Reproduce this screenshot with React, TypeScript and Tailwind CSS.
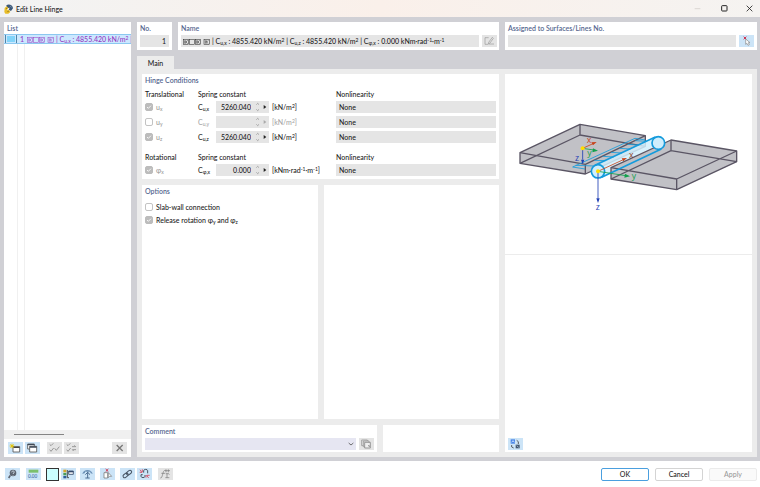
import { useState } from "react"
import type { ReactNode } from "react"
import clsx from "clsx"

const springRows = [
  { id: "ux", symbol: "u", axis: "x", sub: "u,x", value: "5260.040", checked: true, dim: false },
  { id: "uy", symbol: "u", axis: "y", sub: "u,y", value: "", checked: false, dim: true },
  { id: "uz", symbol: "u", axis: "z", sub: "u,z", value: "5260.040", checked: true, dim: false },
]

const rotationRows = [
  { id: "phix", symbol: "φ", axis: "x", sub: "φ,x", value: "0.000", checked: true, dim: false },
]

type Row = (typeof springRows)[number]

function Sub({ children }: { children: ReactNode }) {
  return <sub className="text-[5px] leading-none">{children}</sub>
}

function Sup({ children }: { children: ReactNode }) {
  return <sup className="text-[5px] leading-none">{children}</sup>
}

// Small boxed glyphs that stand for fixed / free directions
function HingeGlyphs() {
  return (
    <svg className="mr-[2px] inline-block h-[6px] w-[27px] align-[-1px]" viewBox="0 0 81 18" fill="none" stroke="currentColor" strokeWidth="1.5">
      {[1, 37, 63].map((x) => (
        <g key={x}>
          <rect x={x} y="1" width="16" height="16" />
          <path d={`M${x + 4} 4v10M${x + 7} 4v10M${x + 13} 4l-5 5 5 5`} />
        </g>
      ))}
      <rect x="19" y="1" width="16" height="16" />
    </svg>
  )
}

function HingeName({ short }: { short?: boolean }) {
  return (
    <>
      <HingeGlyphs />| C<Sub>u,x</Sub> : 4855.420 kN/m<Sup>2</Sup> | C
      {!short && (
        <>
          <Sub>u,z</Sub> : 4855.420 kN/m<Sup>2</Sup> | C<Sub>φ,x</Sub> : 0.000 kNm·rad<Sup>-1</Sup>·m<Sup>-1</Sup>
        </>
      )}
    </>
  )
}

function Title({ children }: { children: ReactNode }) {
  return <h2 className="h-[13px] font-semibold leading-[12px] text-[#56678f]">{children}</h2>
}

function Checkbox({ id, checked, disabled, label }: { id: string; checked: boolean; disabled?: boolean; label: ReactNode }) {
  const [on, setOn] = useState(checked)
  return (
    <div className="flex h-3 items-center gap-[3px]">
      <span className="grid size-2 shrink-0">
        <input
          id={id}
          type="checkbox"
          checked={on}
          disabled={disabled}
          onChange={() => setOn(!on)}
          className="size-2 appearance-none rounded-[2px] border border-[#c3c3c3] bg-white [grid-area:1/1] checked:border-[#bcbcbc] checked:bg-[#bcbcbc]"
        />
        {on && (
          <svg className="pointer-events-none size-2 [grid-area:1/1]" viewBox="0 0 24 24" fill="none" stroke="white" strokeWidth="2.5">
            <path d="M6 12l4 4 8-8" />
          </svg>
        )}
      </span>
      <label htmlFor={id}>{label}</label>
    </div>
  )
}

function ConditionRow({ row, unit }: { row: Row; unit: ReactNode }) {
  return (
    <div className="grid h-3 grid-cols-[53px_18px_53px_67px_minmax(0,1fr)] items-center">
      <div className="text-[#9a9a9a]">
        <Checkbox id={row.id} checked={row.checked} disabled label={<>{row.symbol}<Sub>{row.axis}</Sub></>} />
      </div>
      <label htmlFor={`${row.id}-c`} className={clsx(row.dim && "text-[#a5a5a5]")}>
        C<Sub>{row.sub}</Sub>
      </label>
      <div className="flex h-3 items-center bg-[#e5e5e5]">
        <input id={`${row.id}-c`} defaultValue={row.value} readOnly className="h-3 w-[35px] bg-transparent text-right outline-none" />
        <svg className="ml-[4px] h-[10px] w-[5px]" viewBox="0 0 15 30" fill="none" stroke="#888" strokeWidth="2">
          <path d="M4 8l4-4 4 4M4 22l4 4 4-4" />
        </svg>
        <button aria-label="More" className="ml-[3px] flex h-3 w-[5px] items-center">
          <svg className="h-[6px] w-[4px]" viewBox="0 0 12 18" fill={row.dim ? "#aaa" : "#222"}>
            <path d="M2 3v12l8-6z" />
          </svg>
        </button>
      </div>
      <div className={clsx("pl-[3px]", row.dim && "text-[#a5a5a5]")}>{unit}</div>
      <select aria-label="Nonlinearity" className="h-3 w-full appearance-none bg-[#e5e5e5] pl-[3px]">
        <option>None</option>
      </select>
    </div>
  )
}

function ConditionHeader({ first }: { first: string }) {
  return (
    <div className="mb-px grid h-3 grid-cols-[53px_138px_minmax(0,1fr)] items-center">
      <span>{first}</span>
      <span>Spring constant</span>
      <span>Nonlinearity</span>
    </div>
  )
}

function ToolButton({ label, muted, children }: { label: string; muted?: boolean; children: ReactNode }) {
  return (
    <button aria-label={label} className={clsx("flex h-3 w-[15px] shrink-0 items-center justify-center", muted ? "bg-[#e4e4e4]" : "bg-[#cce4f7]")}>
      <svg className="h-3 w-[15px]" viewBox="0 0 45 36" fill="none" strokeWidth="2.500">
        {children}
      </svg>
    </button>
  )
}

function AppIcon() {
  return (
    <svg className="h-[10px] w-[10px]" viewBox="0 0 30 30">
      <path d="M7 4C14 -1 27 3 27 13l-6 8-7-4 3-6-8 2z" fill="#3c5878" />
      <path d="M2 12l6-5 5 5-4 6 7 1 3 5-6 5H4l-3-5z" fill="#e8bd28" />
      <path d="M6 15l3-3M10 23l5-2" stroke="#7a6518" strokeWidth="2" />
      <path d="M18 6l5 4" stroke="#8aa5bf" strokeWidth="2" />
    </svg>
  )
}

// Two slabs joined by a line hinge, with local and global axes
function HingePreview() {
  return (
    <svg className="w-full" viewBox="0 -108 741 540" fill="none" strokeLinejoin="round">
      <g stroke="#5a5564" strokeWidth="4">
        <path d="M45 128L225 43 421 77V109L241 192 45 160z" fill="#c1c1c6" />
        <path d="M45 160L225 75 421 109M225 43V75" />
      </g>
      <path d="M270 166L451 81A20 20 0 0 1 469 117L290 202z" fill="#d2effc" fillOpacity="0.850" />
      <path d="M45 128L241 163V192M241 163L421 77" stroke="#5a5564" strokeWidth="4" />
      <g stroke="#149bdc" strokeWidth="2.500">
        <path d="M203 171L390 85 421 90M203 171L240 177M212 166L268 168M268 151L301 152M293 139L326 141M318 127L351 129M343 115L376 117M368 103L401 105M391 92L425 94" />
      </g>
      <g stroke="#5a5564" strokeWidth="4">
        <path d="M318 173L498 90 695 123V155L515 239 318 207z" fill="#c1c1c6" />
        <path d="M318 173L515 207 695 123M515 207V239M318 207L498 122 695 155M498 90V122" />
      </g>
      <g stroke="#149bdc" strokeWidth="5">
        <circle cx="279" cy="184" r="20" fill="#cfeefc" />
        <circle cx="460" cy="99" r="19" fill="#cfeefc" />
        <path d="M270 166L451 81M290 202L469 117" />
      </g>
      <g strokeWidth="2.500">
        <path d="M233 115L264 101M279 184L355 149" stroke="#c8441b" />
        <path d="M275 96l-16 1 5 9zM366 144l-16 1 5 9z" fill="#c8441b" />
        <path d="M233 115L266 120M279 184L362 197" stroke="#12a04c" />
        <path d="M279 122l-15-7-2 12zM375 199l-15-8-2 12z" fill="#12a04c" />
        <path d="M233 115V149M279 184V265" stroke="#1f3fb4" />
        <path d="M233 163l-5-14h10zM279 279l-5-14h10z" fill="#1f3fb4" />
      </g>
      <circle cx="233" cy="115" r="6" fill="#ffdd00" />
      <circle cx="279" cy="184" r="6" fill="#ffdd00" />
      <g className="font-['Open_Sans',sans-serif] text-[26px]">
        <text x="245" y="99" fill="#c8441b">x</text>
        <text x="247" y="139" fill="#12a04c">y</text>
        <text x="210" y="152" fill="#1f3fb4">z</text>
        <text x="372" y="143" fill="#8b3a25">x</text>
        <text x="380" y="208" fill="#12a04c">y</text>
        <text x="272" y="300" fill="#1f3fb4">z</text>
      </g>
    </svg>
  )
}

export default function App() {
  return (
    <div className="flex min-h-screen flex-col bg-[#d0d0d5] font-['Lato','Open_Sans','Noto_Sans',sans-serif] text-[7px] leading-[10px] font-medium text-[#1c1c1c]">
      {/* Title bar */}
      <header className="flex h-[17px] items-center bg-linear-to-r from-[#f2f3f3] via-[#faf0ea] to-[#f5f3f1] pl-1">
        <AppIcon />
        <h1 className="ml-[2px] flex-1">Edit Line Hinge</h1>
        <div className="flex">
          <button aria-label="Minimize" disabled className="flex h-[17px] w-[27px] items-center justify-center">
            <svg className="size-[7px]" viewBox="0 0 21 21" stroke="#cfc9c6" strokeWidth="2"><path d="M2 11h17" /></svg>
          </button>
          <button aria-label="Maximize" className="flex h-[17px] w-[27px] items-center justify-center">
            <svg className="size-[7px]" viewBox="0 0 21 21" fill="none" stroke="#222" strokeWidth="3"><rect x="2" y="2" width="16" height="16" rx="2" /></svg>
          </button>
          <button aria-label="Close" className="flex h-[17px] w-[22px] items-center justify-center">
            <svg className="size-[7px]" viewBox="0 0 21 21" stroke="#222" strokeWidth="2.500"><path d="M2 2l17 17M19 2L2 19" /></svg>
          </button>
        </div>
      </header>

      <main className="flex flex-1 gap-[6px] pt-[5px] pr-[3px] pb-[4px] pl-1">
        {/* List */}
        <aside className="flex w-[127px] shrink-0 flex-col bg-white">
          <div className="px-[3px]"><h2 className="h-[12px] font-semibold leading-[12px] text-[#56678f]">List</h2></div>
          <ul>
            <li className="flex h-[10px] items-center overflow-hidden border-y border-[#8cc8f0] bg-[#cce8ff] whitespace-nowrap text-[#9538c0]">
              <span className="ml-px h-[10px] w-3 shrink-0 border border-[#4f86a8] bg-[#cce8ff] p-px"><span className="block h-[6px] w-2 bg-[#82d4fa]" /></span>
              <span className="w-[10px] shrink-0 pl-[3px]">1</span>
              <span><HingeName short /></span>
            </li>
          </ul>
          <div className="ml-[13px] w-[8px] flex-1 border-x border-[#f0f0f0]" />
          <div className="flex h-[9px] items-center bg-[#f0f0f0] pl-[10px]">
            <div className="h-px w-[50px] bg-[#858585]" />
          </div>
          <div className="flex h-[18px] items-center gap-[2px] px-1">
            <ToolButton label="New">
              <path d="M15 14h20v16H15z" stroke="#555" fill="#fff" />
              <path d="M15 16h20" stroke="#444" strokeWidth="4" />
              <path d="M12 5v14M5 12h14M7 7l10 10M17 7L7 17" stroke="#e4c400" />
            </ToolButton>
            <ToolButton label="Copy">
              <path d="M8 6h20v15H8z" stroke="#555" fill="#fff" />
              <path d="M14 13h21v17H14z" stroke="#555" fill="#fff" />
              <path d="M14 15h21M8 8h20" stroke="#3d4857" strokeWidth="4" />
            </ToolButton>
            <div className="w-[3px]" />
            <ToolButton label="Select all" muted>
              <path d="M8 7l4 4 7-7M8 23l4 5 8-10M23 19l5 6 9-11" stroke="#888" />
            </ToolButton>
            <ToolButton label="Invert selection" muted>
              <path d="M8 7l4 4 7-7M8 23l4 5 8-10M24 14h11l-4-4M36 23H25l4 4" stroke="#888" />
            </ToolButton>
            <div className="flex-1" />
            <ToolButton label="Delete" muted>
              <path d="M14 9l18 18M32 9L14 27" stroke="#777" strokeWidth="4" />
            </ToolButton>
          </div>
        </aside>

        <div className="flex min-w-0 flex-1 flex-col">
          {/* Identification */}
          <div className="grid grid-cols-[35px_minmax(0,321fr)_minmax(0,252fr)] gap-[6px]">
            <section className="bg-white px-[3px] pb-[3px]">
              <Title><label htmlFor="no">No.</label></Title>
              <input id="no" readOnly value="1" className="block h-3 w-full bg-[#e5e5e5] pr-[3px] text-right" />
            </section>
            <section className="bg-white pr-[2px] pb-[3px] pl-[3px]">
              <Title><span id="name-label">Name</span></Title>
              <div className="flex gap-[3px]">
                <div role="textbox" tabIndex={0} aria-readonly="true" aria-labelledby="name-label" className="h-3 min-w-0 flex-1 bg-[#e5e5e5] pl-[2px] leading-[12px] whitespace-nowrap">
                  <HingeName />
                </div>
                <ToolButton label="Edit name" muted>
                  <path d="M20 8H9v20h9M20 27h16M31 7L20 22l-1 5 5-3L34 10z" stroke="#999" strokeWidth="2" />
                </ToolButton>
              </div>
            </section>
            <section className="bg-white px-[3px] pb-[3px]">
              <Title><label htmlFor="assigned">Assigned to Surfaces/Lines No.</label></Title>
              <div className="flex gap-[3px]">
                <input id="assigned" readOnly className="block h-3 min-w-0 flex-1 bg-[#e5e5e5]" />
                <ToolButton label="Pick lines">
                  <path d="M14 5l8 8M22 5l-8 8" stroke="#d03050" strokeWidth="3" />
                  <path d="M20 12v16l4-3 3 6 4-2-3-6h5z" stroke="#888" fill="#fff" strokeWidth="2" />
                </ToolButton>
              </div>
            </section>
          </div>

          <nav className="mt-[6px] flex">
            <button className="h-[13px] w-[37px] bg-[#ececec] text-center">Main</button>
          </nav>

          <div className="grid flex-1 grid-cols-[minmax(0,357fr)_minmax(0,247fr)] gap-[6px] bg-[#ececec] p-[5px]">
            <div className="flex flex-col gap-[6px]">
              <section className="bg-white px-[3px] pb-[3px]">
                <Title>Hinge Conditions</Title>
                <div className="pt-px">
                  <ConditionHeader first="Translational" />
                  <div className="flex flex-col gap-[3px]">
                    {springRows.map((row) => (
                      <ConditionRow key={row.id} row={row} unit={<>[kN/m<Sup>2</Sup>]</>} />
                    ))}
                  </div>
                </div>
                <div className="pt-2">
                  <ConditionHeader first="Rotational" />
                  {rotationRows.map((row) => (
                    <ConditionRow key={row.id} row={row} unit={<>[kNm·rad<Sup>-1</Sup>·m<Sup>-1</Sup>]</>} />
                  ))}
                </div>
              </section>

              <div className="grid flex-1 grid-cols-2 gap-[6px]">
                <section className="bg-white px-[3px]">
                  <Title>Options</Title>
                  <div className="flex flex-col gap-px pt-[3px]">
                    <Checkbox id="slab" checked={false} label="Slab-wall connection" />
                    <Checkbox id="release" checked disabled label={<>Release rotation φ<Sub>y</Sub> and φ<Sub>z</Sub></>} />
                  </div>
                </section>
                <section className="bg-white" />
              </div>

              <div className="grid grid-cols-[minmax(0,235fr)_minmax(0,116fr)] gap-[6px]">
                <section className="bg-white px-[3px] pb-[2px]">
                  <Title><label htmlFor="comment">Comment</label></Title>
                  <div className="flex gap-[3px]">
                    <div className="grid h-3 flex-1 items-center bg-[#e6e6f2]">
                      <select id="comment" className="h-3 w-full appearance-none [grid-area:1/1]"><option /></select>
                      <svg className="pointer-events-none mr-[2px] size-[6px] justify-self-end [grid-area:1/1]" viewBox="0 0 18 18" fill="none" stroke="#555" strokeWidth="2.500"><path d="M2 6l7 6 7-6" /></svg>
                    </div>
                    <ToolButton label="Comment library" muted>
                      <path d="M8 6h17v17H8z" stroke="#999" />
                      <path d="M13 9h17v17H13z" stroke="#999" fill="#e4e4e4" />
                      <path d="M17 13h17v17H17z" stroke="#888" fill="#eee" />
                      <path d="M27 23h4v4" stroke="#888" />
                    </ToolButton>
                  </div>
                </section>
                <section className="bg-white" />
              </div>
            </div>

            {/* Preview */}
            <section className="flex flex-col bg-white">
              <HingePreview />
              <div className="flex flex-1 items-end border-t border-[#ececec] px-[3px] pb-[2px]">
                <ToolButton label="Change view">
                  <path d="M8 4h13v13H8z" fill="#4a86e8" />
                  <path d="M11 13l4-5 4 5" stroke="#dcebfb" />
                  <path d="M26 7l5 4v7M11 21v6l6 3" stroke="#444" />
                  <path d="M23 20h12v11H23z" fill="#43566e" />
                  <path d="M26 23l6 5" stroke="#a9c4e0" />
                </ToolButton>
              </div>
            </section>
          </div>
        </div>
      </main>

      <footer className="flex h-[26px] items-center bg-white pr-[3px] pl-[5px]">
        <div className="flex flex-1 items-center">
          <ToolButton label="Help">
            <circle cx="24" cy="15" r="10" fill="#5d6470" />
            <path d="M16 22l-5 8" stroke="#5d6470" strokeWidth="5" />
            <path d="M20 13c0-5 8-5 8-1 0 3-4 3-4 6M24 21v2" stroke="#dfeaf5" />
          </ToolButton>
          <div className="w-[6px]" />
          <ToolButton label="Units">
            <path d="M8 5h29v9H8z" fill="#7cc06c" />
            <text x="6" y="29" className="text-[14px]" fill="#33659c">0.00</text>
          </ToolButton>
          <button aria-label="Color" className="ml-[5px] h-[13px] w-[13px] border border-[#333] bg-[#ccffff]" />
          <div className="w-[2px]" />
          <ToolButton label="Display settings">
            <path d="M7 5h9v8H7z" fill="#d4a72c" />
            <path d="M7 15h9v7H7z" fill="#4a9b5b" />
            <path d="M7 24h9v7H7z" fill="#2f5e9c" />
            <path d="M19 6v23M19 29h5" stroke="#333" />
            <path d="M23 9h14v10H23z" stroke="#34496a" fill="#fff" />
            <path d="M23 11h14" stroke="#34496a" strokeWidth="4" />
          </ToolButton>
          <div className="w-[4px]" />
          <ToolButton label="View">
            <path d="M7 18C10 2 35 2 38 18l-7-3v-4H15v4z" fill="#6f93b8" />
            <path d="M23 12v18M16 20l7-7 7 7M16 30h13" stroke="#4b6c91" strokeWidth="3" />
          </ToolButton>
          <div className="w-[5px]" />
          <ToolButton label="Remove assignment">
            <path d="M17 3l8 8M25 3l-8 8" stroke="#cf2f45" strokeWidth="3" />
            <path d="M12 14h11v16H12z" stroke="#666" fill="#fff" strokeWidth="2" />
            <path d="M25 14v15l4-4h6z" stroke="#777" fill="#fff" strokeWidth="2" />
          </ToolButton>
          <div className="w-[5px]" />
          <ToolButton label="Link">
            <g stroke="#465363" strokeWidth="3" transform="rotate(-38 22 18)">
              <rect x="7" y="13" width="17" height="10" rx="5" />
              <rect x="20" y="13" width="17" height="10" rx="5" />
            </g>
          </ToolButton>
          <div className="w-[2px]" />
          <ToolButton label="Unlink">
            <path d="M20 14V8c0-5 12-5 12 0v8M24 21v4c0 5-12 5-12 0v-5h5" stroke="#465363" strokeWidth="3" />
            <path d="M9 5l6 9M16 4v8M8 13h7M28 21l7 9M27 29v-6M30 22h8" stroke="#d9435a" strokeWidth="2.500" />
          </ToolButton>
          <div className="w-[6px]" />
          <ToolButton label="Formula" muted>
            <path d="M7 30c8 2 6-25 15-23M10 16h11M21 8h15M24 4v9M31 4v9M23 17h9M27 17v12M22 29h12M32 17l2 3" stroke="#777" strokeWidth="2" />
          </ToolButton>
        </div>
        <div className="flex gap-[6px]">
          <button className="h-[13px] w-[48px] rounded-[2px] border border-[#4a9fdf] bg-white leading-none">OK</button>
          <button className="h-[13px] w-[48px] rounded-[2px] border border-[#d4d4d4] bg-white leading-none">Cancel</button>
          <button disabled className="h-[13px] w-[48px] rounded-[2px] border border-[#ebebeb] bg-[#fafafa] leading-none text-[#9a9a9a]">Apply</button>
        </div>
      </footer>
    </div>
  )
}
